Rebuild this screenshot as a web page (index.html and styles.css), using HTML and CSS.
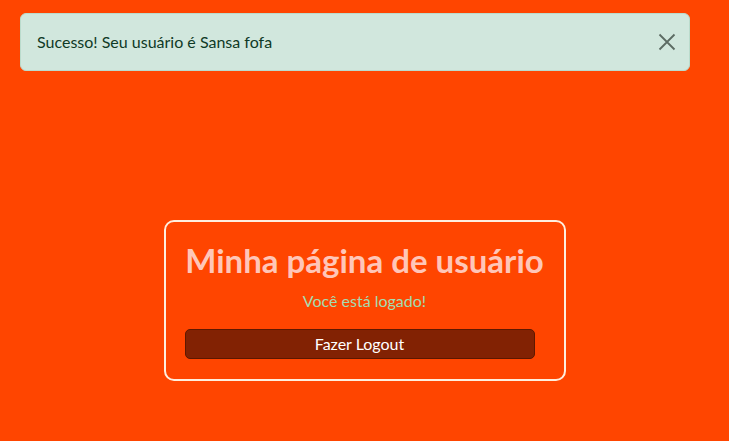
FILE: index.html
```html
<!DOCTYPE html>
<html lang="pt-BR">
<head>
<meta charset="utf-8">
<title>Minha página de usuário</title>
<link rel="stylesheet" href="styles.css">
</head>
<body>
  <div class="alert">
    <span class="alert-text">Sucesso! Seu usuário é Sansa fofa</span>
    <button class="close" aria-label="Fechar">
      <svg width="18" height="18" viewBox="0 0 18 18"><path d="M1.5 1.5 L16.5 16.5 M16.5 1.5 L1.5 16.5" stroke="currentColor" stroke-width="1.8" fill="none"/></svg>
    </button>
  </div>
  <main class="page">
    <section class="card">
      <h1 class="title">Minha página de usuário</h1>
      <p class="status">Você está logado!</p>
      <button class="logout">Fazer Logout</button>
    </section>
  </main>
</body>
</html>
```
FILE: styles.css
```css
* { box-sizing: border-box; }
html, body { margin: 0; padding: 0; }
body {
  background: #ff4500;
  font-family: Lato, "Noto Sans", sans-serif;
  min-height: 441px;
}
.alert {
  position: relative;
  margin: 13px 39px 0 20px;
  padding: 16px 48px 16px 16px;
  background: #d1e7dd;
  border: 1px solid #badbcc;
  border-radius: 6px;
  color: #0f3a26;
  font-size: 16px;
  line-height: 24px;
}
.close {
  position: absolute;
  right: 10px;
  top: 50%;
  transform: translateY(-50%);
  width: 24px;
  height: 24px;
  padding: 3px;
  background: none;
  border: 0;
  color: #5c6b63;
  display: flex;
  align-items: center;
  justify-content: center;
}
.page {
  display: flex;
  justify-content: center;
  padding-top: 149px;
}
.card {
  width: 402px;
  border: 2px solid #ffeedd;
  border-radius: 10px;
  padding: 16px 19px 20px;
  display: flex;
  flex-direction: column;
  align-items: center;
}
.title {
  margin: 0;
  color: #ffc6b8;
  font-size: 33px;
  font-weight: 700;
  line-height: 44px;
  white-space: nowrap;
}
.status {
  margin: 9px 0 18px;
  color: #a4dcb0;
  font-size: 16px;
  line-height: 20px;
}
.logout {
  align-self: flex-start;
  width: 350px;
  height: 30px;
  background: #822203;
  border: 1px solid #5e1800;
  border-radius: 5px;
  color: #fff;
  font-family: inherit;
  font-size: 16px;
  line-height: 20px;
  padding: 2px 8px;
}
```
